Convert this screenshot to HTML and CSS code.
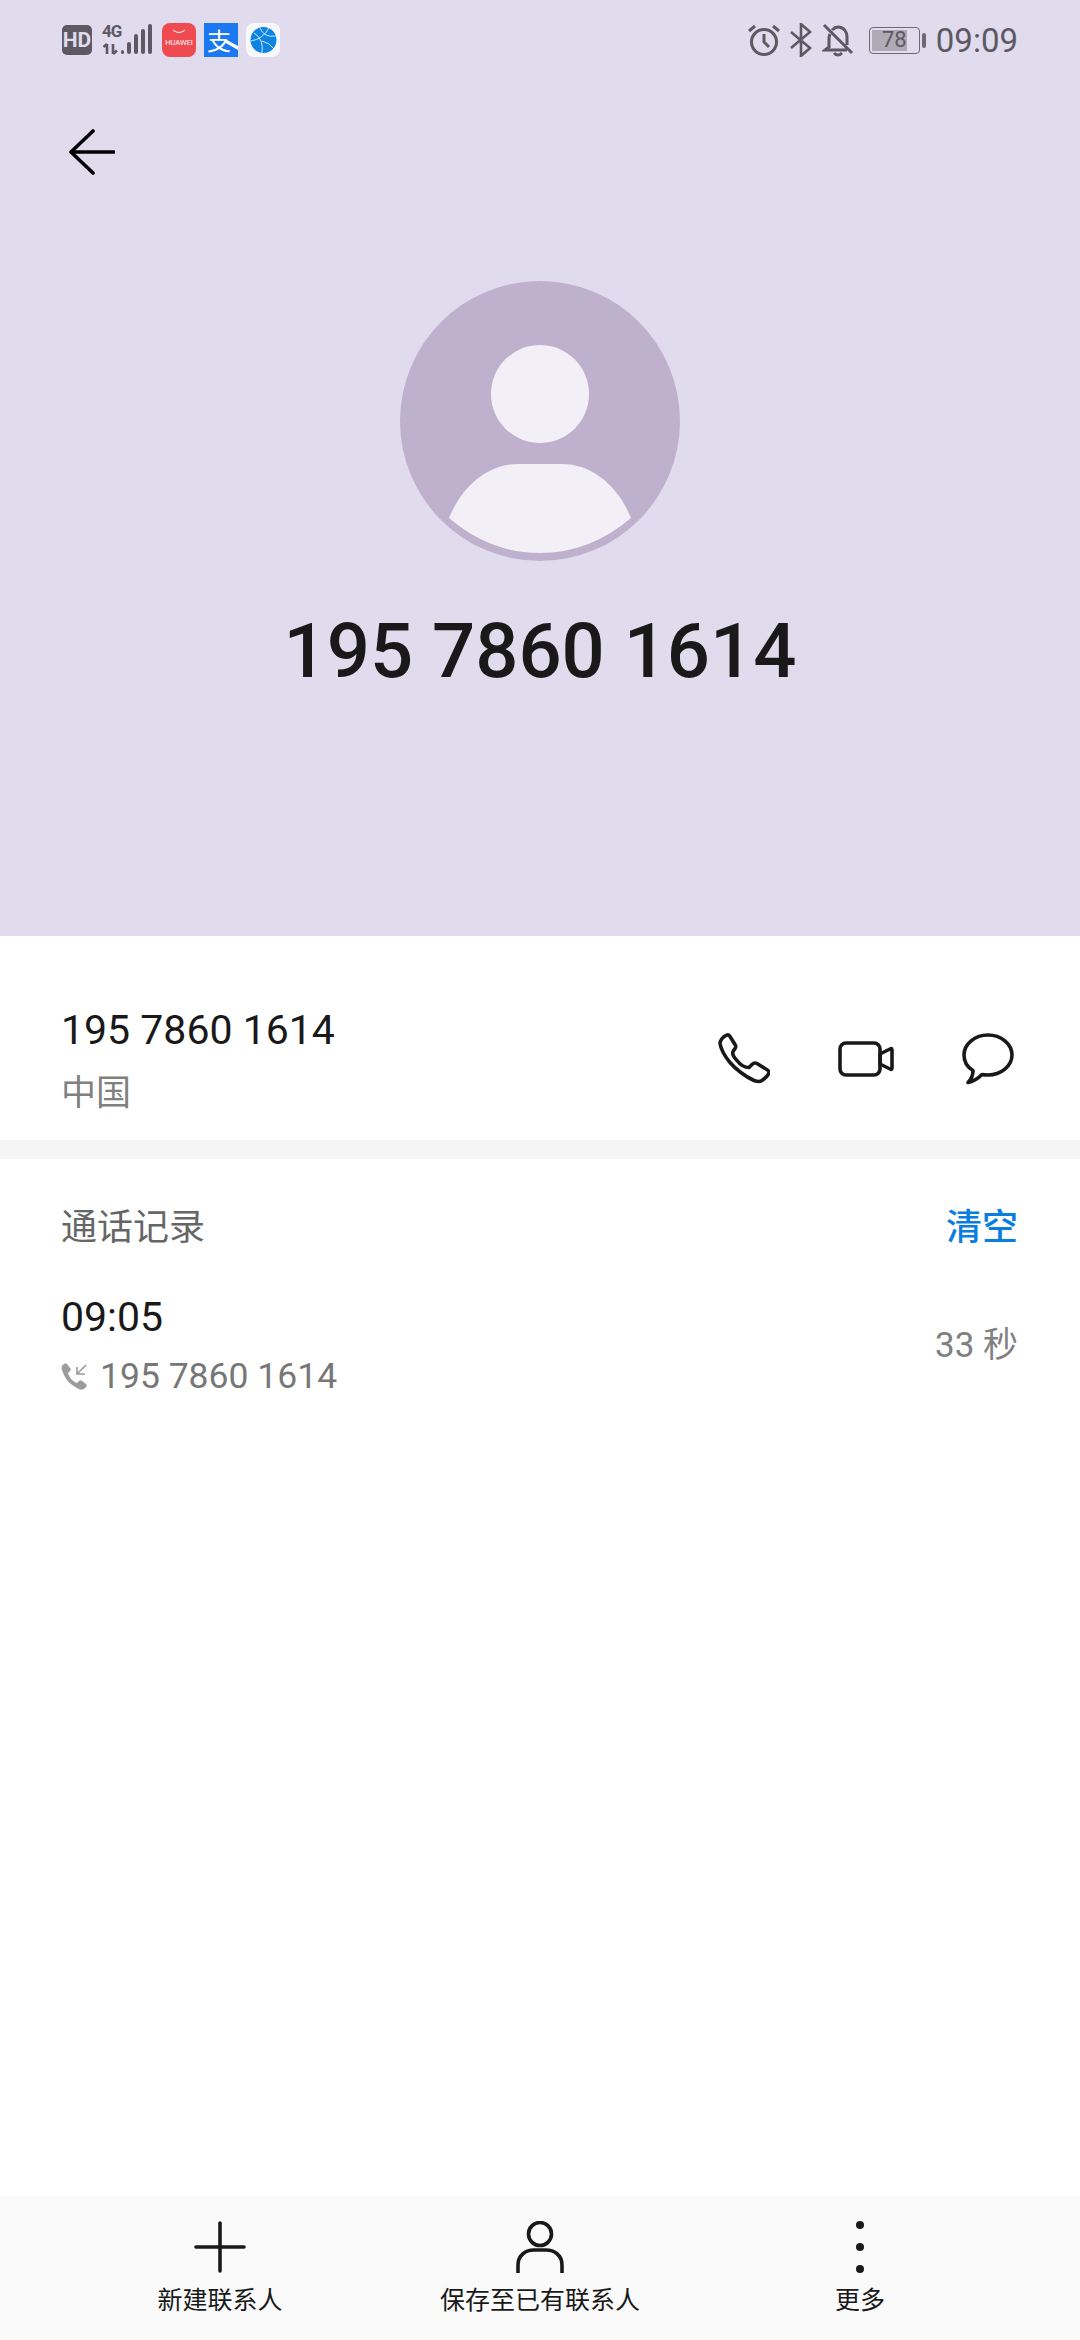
FILE: index.html
```html
<!DOCTYPE html>
<html lang="zh-CN">
<head>
    <meta charset="UTF-8">
    <meta name="viewport" content="width=device-width, initial-scale=1.0">
    <title>通话详情</title>
    <link rel="stylesheet" href="styles.css">
</head>
<body>
    <div class="page">
        <header class="hero">
            <div class="status-bar">
                <div class="status-left">
                    <span class="hd">HD</span>
                    <div class="net">
                        <span class="net-label">4G</span>
                        <svg width="52" height="34" viewBox="0 0 52 34">
                            <path d="M5 21v10M1.500 24l3.500-3M11 31V21M11 31l4-3.500" fill="none" stroke="#5c5963" stroke-width="2.600"/>
                            <rect x="19" y="27" width="3" height="4" rx="1.500" fill="#5c5963"/>
                            <rect x="25" y="19" width="4" height="12" rx="2" fill="#5c5963"/>
                            <rect x="32" y="11" width="4" height="20" rx="2" fill="#5c5963"/>
                            <rect x="39" y="6" width="4" height="25" rx="2" fill="#5c5963"/>
                            <rect x="46" y="1" width="4" height="30" rx="2" fill="#5c5963"/>
                        </svg>
                    </div>
                    <svg class="app" width="34" height="34" viewBox="0 0 34 34">
                        <rect width="34" height="34" rx="8" fill="#ee4a50"/>
                        <path d="M11 7q6 5 12 0" fill="none" stroke="#fff" stroke-width="1"/>
                        <text x="17" y="22" class="huawei-text">HUAWEI</text>
                    </svg>
                    <div class="ali">
                        <span>支</span>
                        <svg class="ali-tail" width="34" height="34" viewBox="0 0 34 34">
                            <path d="M20 19l14 8v-4l-11-6z" fill="#fff"/>
                        </svg>
                    </div>
                    <svg class="app" width="34" height="34" viewBox="0 0 34 34">
                        <rect width="34" height="34" rx="8" fill="#f6f8fc"/>
                        <circle cx="17.500" cy="17" r="13" fill="#0d83e4"/>
                        <path d="M8 10q10 6 8 20M14 5q4 10 16 8M5 18q12-2 18-13M16 18q8 2 12 8" fill="none" stroke="#cfe8fb" stroke-width="1"/>
                    </svg>
                </div>
                <div class="status-right">
                    <svg width="34" height="34" viewBox="0 0 34 34" fill="none" stroke="#5c5963" stroke-width="3">
                        <circle cx="17" cy="19" r="12.500"/>
                        <path d="M17 11v8l5 5M2 8l6-5M32 8l-6-5"/>
                    </svg>
                    <svg class="bt" width="22" height="34" viewBox="0 0 22 34" fill="none" stroke="#5c5963" stroke-width="2.600">
                        <path d="M1 9l19 16-9 8V1l9 8L1 25"/>
                    </svg>
                    <svg class="bell" width="32" height="34" viewBox="0 0 32 34" fill="none" stroke="#5c5963" stroke-width="3">
                        <path d="M2 2l28 28M10 7q3-3 6-3c6 0 9 5 9 10v8M8 11q-1 2-1 5v8l-4 3h22M12 30q4 4 8 0"/>
                    </svg>
                    <div class="battery">
                        <div class="battery-box">
                            <div class="battery-fill"></div>
                            <span class="battery-num">78</span>
                        </div>
                        <div class="battery-cap"></div>
                    </div>
                    <span class="clock">09:09</span>
                </div>
            </div>

            <div class="back">
                <svg width="46" height="46" viewBox="0 0 46 46" fill="none" stroke="#000" stroke-width="3.600" stroke-linecap="round" stroke-linejoin="round">
                    <path d="M24 2L2 23l22 21M2 23h43"/>
                </svg>
            </div>

            <svg class="avatar" width="280" height="280" viewBox="0 0 280 280">
                <circle cx="140" cy="140" r="140" fill="#bfb1cd"/>
                <circle cx="140" cy="113" r="49" fill="#f2eff6"/>
                <path d="M49 237C62 205 88 183 118 183h44c30 0 56 22 69 54q-41 35-91 35t-91-35z" fill="#f2eff6"/>
            </svg>

            <h1 class="big-number">195 7860 1614</h1>
        </header>

        <section class="contact">
            <div class="contact-info">
                <div class="contact-number">195 7860 1614</div>
                <div class="contact-place">中国</div>
            </div>
            <div class="contact-actions">
                <svg width="52" height="52" viewBox="0 0 52 52" fill="none" stroke="#191919" stroke-width="3.600" stroke-linejoin="round">
                    <path d="M8 2.500c-3 1-6 5-6 8 1 6 5 13 10 19s15 14 24 18c3 1 5 2 8 0 3-2 7-6 7-8 0-2-2-3-4-4l-8-5c-2-1-3-1-5 1l-3 3c-5 0-9-3-12-7-3-3-5-6-4-9l2-3c1-1 1-3 0-4l-5-8c-1-2-2-2-4-1z"/>
                </svg>
                <svg class="video-icon" width="56" height="36" viewBox="0 0 56 36" fill="none" stroke="#191919" stroke-width="3.600" stroke-linejoin="round">
                    <rect x="2" y="2" width="40" height="32" rx="6"/>
                    <path d="M42 13l10-5c2-1 2 0 2 2v16c0 2 0 3-2 2l-10-5z"/>
                </svg>
                <svg width="52" height="52" viewBox="0 0 52 52" fill="none" stroke="#191919" stroke-width="3.600" stroke-linejoin="round">
                    <path d="M26 2c13 0 24 9 24 20s-11 20-24 20c-2 0-4 0-6-.500-3 3-8 7-14 8 3-3 5-7 5-12C5 34 2 28 2 22 2 11 13 2 26 2z"/>
                </svg>
            </div>
        </section>

        <div class="divider"></div>

        <section class="log">
            <div class="log-head">
                <span class="log-title">通话记录</span>
                <span class="log-clear">清空</span>
            </div>
            <div class="log-row">
                <div>
                    <div class="log-time">09:05</div>
                    <div class="log-sub">
                        <svg width="27" height="27" viewBox="0 0 27 27" fill="#9b9b9b">
                            <path d="M3 1C1 2 0 4 1 7c2 7 7 14 15 18 3 2 5 2 7 1l2-2c1-1 1-2 0-3l-4-3c-1-1-2-1-3 0l-2 2c-4-1-8-6-9-10l2-2c1-1 1-2 0-3L6 1C5 0 4 0 3 1z"/>
                            <path d="M25 2l-9 9M16 4v7h8" fill="none" stroke="#9b9b9b" stroke-width="1.600"/>
                        </svg>
                        <span>195 7860 1614</span>
                    </div>
                </div>
                <span class="log-duration">33 秒</span>
            </div>
        </section>

        <nav class="bottom-bar">
            <div class="bar-item">
                <svg width="52" height="52" viewBox="0 0 52 52" stroke="#191919" stroke-width="3.600" stroke-linecap="round" fill="none">
                    <path d="M26 2v48M2 26h48"/>
                </svg>
                <span>新建联系人</span>
            </div>
            <div class="bar-item">
                <svg width="52" height="52" viewBox="0 0 52 52" stroke="#191919" stroke-width="3.600" fill="none">
                    <circle cx="26" cy="13" r="11.500"/>
                    <path d="M4 52V44c0-10 8-15 16-15h12c8 0 16 5 16 15v8"/>
                </svg>
                <span>保存至已有联系人</span>
            </div>
            <div class="bar-item">
                <svg width="52" height="52" viewBox="0 0 52 52" fill="#191919">
                    <circle cx="26" cy="4" r="4"/>
                    <circle cx="26" cy="26" r="4"/>
                    <circle cx="26" cy="48" r="4"/>
                </svg>
                <span>更多</span>
            </div>
        </nav>
    </div>
</body>
</html>
```

FILE: styles.css
```css
* {
    box-sizing: border-box;
}
body {
    margin: 0;
    background: #fff;
    font-family: Roboto, "Noto Sans CJK SC", sans-serif;
    color: #191919;
}
svg {
    display: block;
    flex: none;
}
.page {
    width: 1080px;
    height: 2340px;
    display: flex;
    flex-direction: column;
}

/* top purple part */
.hero {
    height: 936px;
    background: #e0dbed;
    display: flex;
    flex-direction: column;
    align-items: center;
}
.status-bar {
    width: 100%;
    height: 80px;
    padding: 0 62px;
    display: flex;
    justify-content: space-between;
    align-items: center;
    color: #5c5963;
}
.status-left {
    display: flex;
    align-items: center;
}
.hd {
    width: 30px;
    height: 30px;
    border-radius: 5px;
    background: #5c5963;
    color: #e0dbed;
    font-size: 21px;
    font-weight: 700;
    line-height: 30px;
    text-align: center;
}
.net {
    position: relative;
    margin-left: 10px;
}
.net-label {
    position: absolute;
    top: 1px;
    left: 0;
    font-size: 17px;
    font-weight: 700;
    line-height: 15px;
    letter-spacing: -1px;
}
.app {
    margin-left: 8px;
}
.huawei-text {
    font-family: Roboto, sans-serif;
    font-size: 7.500px;
    fill: #fff;
    text-anchor: middle;
}
.ali {
    position: relative;
    width: 34px;
    height: 34px;
    margin-left: 8px;
    background: #1c78f0;
    color: #fff;
    font-family: "Noto Sans CJK SC", sans-serif;
    font-size: 24px;
    line-height: 34px;
    padding-left: 3px;
}
.ali-tail {
    position: absolute;
    top: 0;
    left: 0;
}
.status-right {
    display: flex;
    align-items: center;
}
.bt {
    margin-left: 9px;
}
.bell {
    margin-left: 10px;
}
.battery {
    margin-left: 15px;
    display: flex;
    align-items: center;
    gap: 2px;
}
.battery-box {
    position: relative;
    width: 51px;
    height: 27px;
    border: 1.500px solid #6d6a74;
    border-radius: 4px;
    padding: 2px;
}
.battery-fill {
    width: 78%;
    height: 100%;
    background: #aeaab6;
}
.battery-num {
    position: absolute;
    inset: 0;
    font-size: 22px;
    line-height: 24px;
    text-align: center;
}
.battery-cap {
    width: 4px;
    height: 15px;
    border-radius: 2px;
    background: #6d6a74;
}
.clock {
    margin-left: 10px;
    font-size: 33px;
}
.back {
    align-self: flex-start;
    margin: 49px 0 0 69px;
}
.avatar {
    margin-top: 106px;
}
.big-number {
    margin: 46px 0 0;
    font-size: 76px;
    font-weight: 500;
    line-height: 88px;
    color: #191919;
}

/* number row */
.contact {
    height: 204px;
    padding: 42px 62px 0 61px;
    display: flex;
    justify-content: space-between;
    align-items: center;
}
.contact-info {
    padding-top: 6px;
}
.contact-number {
    font-size: 41px;
    line-height: 48px;
}
.contact-place {
    margin-top: 16px;
    font-size: 35px;
    line-height: 48px;
    color: #808080;
}
.contact-actions {
    display: flex;
    align-items: center;
    gap: 68px;
    margin-right: 4px;
}
.divider {
    height: 19px;
    background: #f5f5f5;
}

/* call log */
.log {
    flex: 1;
    padding: 0 62px 0 61px;
}
.log-head {
    height: 91px;
    padding-top: 39px;
    display: flex;
    justify-content: space-between;
    align-items: center;
    font-size: 36px;
}
.log-title {
    color: #666;
}
.log-clear {
    color: #0a7ee0;
    font-weight: 500;
}
.log-row {
    margin-top: 43px;
    display: flex;
    justify-content: space-between;
    align-items: center;
}
.log-time {
    font-size: 41px;
    line-height: 48px;
}
.log-sub {
    margin-top: 11px;
    display: flex;
    align-items: center;
    gap: 12px;
    font-size: 35.500px;
    line-height: 48px;
    color: #777;
}
.log-duration {
    margin-bottom: 11px;
    font-size: 35px;
    color: #808080;
}

/* bottom actions */
.bottom-bar {
    height: 144px;
    padding: 25px 60px 0;
    background: #fafafa;
    display: grid;
    grid-template-columns: repeat(3, 1fr);
}
.bar-item {
    display: flex;
    flex-direction: column;
    align-items: center;
    gap: 10px;
    font-size: 25px;
    line-height: 36px;
    color: #191919;
}
```
